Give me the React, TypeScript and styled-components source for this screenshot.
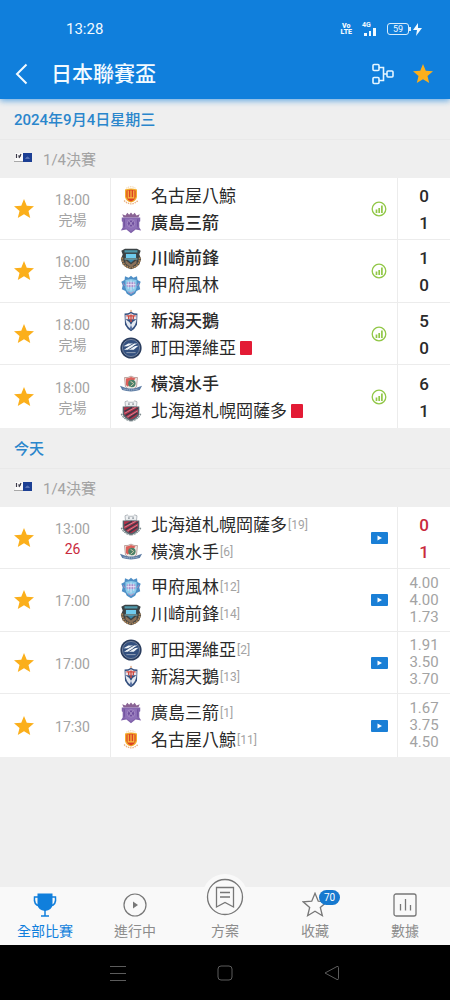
import React from "react";
import styled, { createGlobalStyle, css } from "styled-components";

const color = {
  blue: "#107fdc",
  link: "#2a86cc",
  star: "#fbaf1b",
  red: "#c92a3d",
  muted: "#a3a3a3",
  line: "#ececec",
};

const GlobalStyle = createGlobalStyle`
  *, *::before, *::after { box-sizing: border-box; }
  body {
    margin: 0;
    background: #efefef;
    color: #2a2a2a;
    font-family: Roboto, "Noto Sans CJK TC", sans-serif;
  }
  button { font: inherit; color: inherit; background: none; border: 0; padding: 0; cursor: pointer; }
  h1, h2, h3, ul { margin: 0; padding: 0; font-weight: inherit; }
  ul { list-style: none; }
  svg { display: block; flex: none; }
`;

const Page = styled.div`
  min-height: 100vh;
  display: flex;
  flex-direction: column;
`;

const Header = styled.header`
  background: ${color.blue};
  color: #f2faff;
  box-shadow: 0 2px 6px rgba(16, 127, 220, 0.6);
  z-index: 1;
`;

const StatusBar = styled.div`
  height: 48px;
  padding: 10px 28px 0 66px;
  display: flex;
  align-items: center;
  justify-content: space-between;
  font-size: 15px;
`;

const StatusIcons = styled.div`
  display: flex;
  align-items: center;
`;

const Volte = styled.span`
  display: flex;
  flex-direction: column;
  align-items: center;
  margin-right: 10px;
  font-size: 7px;
  line-height: 6px;
  font-weight: 900;
`;

const Signal = styled.span`
  display: flex;
  flex-direction: column;
  margin-right: 10px;
  font-size: 7px;
  line-height: 6px;
  font-weight: 700;
  svg { margin-left: 2px; }
`;

const Battery = styled.span`
  position: relative;
  width: 22px;
  height: 12px;
  margin-right: 4px;
  border: 1px solid #d8ecfb;
  border-radius: 3px;
  font-size: 9px;
  line-height: 10px;
  text-align: center;
  &::after {
    content: "";
    position: absolute;
    left: 21px;
    top: 3px;
    width: 2px;
    height: 4px;
    background: #d8ecfb;
  }
`;

const TitleBar = styled.div`
  height: 51px;
  padding: 0 16px 0 12px;
  display: flex;
  align-items: center;
`;

const Title = styled.h1`
  flex: 1;
  margin-left: 19px;
  font-size: 21px;
  line-height: 32px;
  font-weight: 500;
`;

const BarButton = styled.button`
  margin-left: 17px;
  &:first-child { margin-left: 0; }
`;

const Content = styled.main`
  flex: 1;
  padding-bottom: 24px;
`;

const DateHeading = styled.h2`
  height: 41px;
  padding: 0 14px 2px;
  display: flex;
  align-items: center;
  border-bottom: 1px solid #e9e9e9;
  color: ${color.link};
  font-size: 15px;
  font-weight: 500;
`;

const RoundHeading = styled.h3`
  height: 38px;
  padding: 0 14px 2px;
  display: flex;
  align-items: center;
  gap: 11px;
  color: ${color.muted};
  font-size: 15px;
`;

const MatchRow = styled.li`
  height: 63px;
  display: grid;
  grid-template-columns: 48px 62px 1fr 36px 53px;
  background: #fff;
  border-bottom: 1px solid ${color.line};
  &:nth-child(odd) { height: 62px; }
  &:last-child { border-bottom: 0; }
`;

const FavButton = styled.button`
  display: grid;
  place-items: center;
`;

const Kickoff = styled.div`
  display: flex;
  flex-direction: column;
  justify-content: center;
  padding: 2px 13px 0 0;
  text-align: center;
  color: ${color.muted};
  font-size: 14px;
  line-height: 20px;
`;

const Minute = styled.span`
  color: ${color.red};
`;

const Teams = styled.div`
  display: flex;
  flex-direction: column;
  justify-content: center;
  padding: 2px 0 0 8px;
  border-left: 1px solid ${color.line};
`;

const Team = styled.div<{ $winner?: boolean }>`
  height: 27px;
  display: flex;
  align-items: center;
  white-space: nowrap;
  font-size: 17px;
  line-height: 27px;
  font-weight: ${(p) => (p.$winner ? 500 : 400)};
  & > svg { margin-right: 8px; }
`;

const Rank = styled.span`
  margin-left: 1px;
  color: ${color.muted};
  font-size: 12px;
`;

const RedCard = styled.span`
  width: 12px;
  height: 14px;
  margin-left: 4px;
  border-radius: 1px;
  background: #e31b35;
`;

const MediaButton = styled.button`
  display: grid;
  place-items: center;
`;

const Numbers = styled.div<{ $kind: "final" | "live" | "odds" }>`
  display: flex;
  flex-direction: column;
  justify-content: center;
  padding-top: 2px;
  border-left: 1px solid ${color.line};
  text-align: center;
  font-size: 17px;
  line-height: 27px;
  font-weight: 500;
  ${(p) => p.$kind === "live" && css`color: ${color.red};`}
  ${(p) =>
    p.$kind === "odds" &&
    css`
      padding-top: 0;
      color: ${color.muted};
      font-size: 15px;
      line-height: 17px;
      font-weight: 400;
    `}
`;

const TabBar = styled.nav`
  height: 58px;
  display: grid;
  grid-template-columns: repeat(5, 1fr);
  grid-template-rows: 100%;
  background: #f9f9f9;
`;

const Tab = styled.button<{ $active?: boolean }>`
  display: flex;
  flex-direction: column;
  align-items: center;
  justify-content: flex-end;
  gap: 2px;
  padding-bottom: 3px;
  color: ${(p) => (p.$active ? color.blue : "#8c8c8c")};
  font-size: 14px;
  line-height: 22px;
`;

const TabIcon = styled.span<{ $raised?: boolean }>`
  position: relative;
  flex: none;
  height: 26px;
  display: grid;
  place-items: center;
  ${(p) =>
    p.$raised &&
    css`
      width: 46px;
      height: 46px;
      margin-bottom: -2px;
      border-radius: 50%;
      background: #f9f9f9;
    `}
`;

const Badge = styled.span`
  position: absolute;
  left: 17px;
  top: -2px;
  width: 21px;
  height: 15px;
  border-radius: 8px;
  background: #1679cf;
  color: #fff;
  font-size: 10px;
  line-height: 15px;
`;

const SystemBar = styled.div`
  height: 55px;
  padding: 0 64px;
  display: grid;
  grid-template-columns: repeat(3, 1fr);
  background: #000;
  color: #5c5c5c;
`;

const SystemButton = styled.button`
  display: grid;
  place-items: center;
`;

const STAR = "M12 1.2l3 7.3 7.9.6-6 5.1 1.9 7.7L12 17.7l-6.8 4.2 1.9-7.7-6-5.1 7.9-.6z";

const Star = ({ size }: { size: number }) => (
  <svg width={size} height={size} viewBox="0 0 24 24" fill={color.star}>
    <path d={STAR} />
  </svg>
);

const FlagMark = () => (
  <svg width="18" height="10" viewBox="0 0 18 10">
    <path d="M1 0h8v9H1z" fill="#fafafa" />
    <path d="M9 0h9v9H9z" fill="#1c3f94" />
    <path d="M2.500 1v4M4 3h3M7 1l-2 4" stroke="#3d3b4a" strokeWidth="1.2" fill="none" />
    <path d="M0 8.500h9" stroke="#a8a8a8" />
    <path d="M11 6q2.500-5 5 0z" fill="#5874b8" />
  </svg>
);

type CrestId =
  | "nagoya" | "hiroshima" | "kawasaki" | "kofu"
  | "niigata" | "machida" | "yokohama" | "sapporo";

const crests: Record<CrestId, React.ReactNode> = {
  nagoya: (
    <>
      <path d="M4.500 17q7.500 7 15 0" fill="none" stroke="#e8b080" strokeWidth="1.500" strokeDasharray="1.500 1" />
      <path d="M7 3.500q5-3 10 0" fill="none" stroke="#e9b878" strokeDasharray="1 1" />
      <path d="M5.500 5q6.500-2 13 0v8q-1 4.500-6.500 6-5.500-1.500-6.500-6z" fill="#f3ae2c" />
      <path d="M7 6q5-1.500 10 0v7q-1 3.500-5 5-4-1.500-5-5z" fill="#dd4124" />
      <path d="M9 6v8h6V6M12 6v8" stroke="#f8c040" strokeWidth="1.300" fill="none" />
    </>
  ),
  hiroshima: (
    <>
      <path d="M4 6L2.500 2.500 6 4l2-3 2 2 2-2.500L14 3l2-2 2 3 3.500-1.500L20 6z" fill="#8a6394" />
      <path d="M2 6h20v4l-1 1v6l2 3-6-1-5 4-5-4-6 1 2-3v-6l-1-1z" fill="#8163ab" />
      <path d="M5 7h14v10l-7 4-7-4z" fill="#8e70b8" />
      <circle cx="12" cy="12.500" r="4" fill="#6f4f9e" stroke="#b39bd0" strokeWidth="0.800" />
      <path d="M10 10l4 5M14 10l-4 5" stroke="#c1abd8" strokeWidth="0.800" />
      <path d="M5 8v8M19 8v8" stroke="#6b4d98" strokeWidth="0.800" />
    </>
  ),
  kawasaki: (
    <>
      <path d="M1.500 3l4-2h13l4 2-1.500 4 2 5-2 6-4.500 3.500L12 23l-4.500-1.500L3 18l-2-6 2-5z" fill="#3b4244" />
      <path d="M5 2.500h14v2.500H5z" fill="#4f98ab" />
      <path d="M6.500 6.500h11v4.500h-11z" fill="#6fcbee" />
      <path d="M2.500 10.500q0 10 9.500 11 9.500-1 9.500-11" fill="none" stroke="#a98258" strokeWidth="2.200" strokeDasharray="2 0.800" />
      <path d="M6 13l6 5 6-5v4l-6 4-6-4z" fill="#8a715a" />
      <path d="M8 12.500h8l-4 3.500z" fill="#3787a9" />
      <path d="M5 12h14" stroke="#91c9cf" />
    </>
  ),
  kofu: (
    <>
      <path d="M12 1l2.500 2 4-1.500.5 4 3.500 2-1.500 4 1 4-4 2-1.500 3-4.500 2.500L7.500 20.500 6 17.500l-4-2 1-4-1.500-4 3.500-2 .5-4 4 1.500z" fill="#4f8fc6" />
      <path d="M6 5.500l6-1 6 1v8q-1 5-6 7-5-2-6-7z" fill="#8ccbea" />
      <path d="M7.500 8h9v5h-9z" fill="#a98cc8" />
      <path d="M9 7v8M12 6v11M15 7v8M7 10.500h10" stroke="#eceafa" strokeWidth="0.900" />
      <path d="M3.500 9l2 3M20.500 9l-2 3M9 18l3 2 3-2" stroke="#b586b8" fill="none" />
    </>
  ),
  niigata: (
    <>
      <path d="M12 0v5" stroke="#d9804a" />
      <path d="M5 4q4 0 7-2 3 2 7 2l-.5 12q-2.500 5-6.500 7-4-2-6.500-7z" fill="#35507f" />
      <path d="M6 5.500q3 0 6-2 3 2 6 2V10H6z" fill="#e9e4ea" />
      <path d="M7 6.500h10M12 5v8M9.500 6.500V10M14.500 6.500V10" stroke="#cf4a40" strokeWidth="1.500" fill="none" />
      <path d="M6 10q4 2 6 6 2-4 6-6-.5 7-6 11Q6.500 17 6 10z" fill="#e3e8f0" />
      <path d="M10.500 20l1.500-4 1.500 4-1.500 2z" fill="#5b74a3" />
    </>
  ),
  machida: (
    <>
      <circle cx="12" cy="12" r="11.500" fill="#293c5e" />
      <circle cx="12" cy="12" r="9.300" fill="#33507f" stroke="#8795ac" strokeWidth="0.800" />
      <path d="M4 10l5-3h10l-5 3 6-.5-5 4.500H4.500l5-3.500z" fill="#eff4f8" />
      <path d="M6 12l9-5M9 14l8-5" stroke="#29436d" strokeWidth="0.900" />
      <path d="M7 17h10" stroke="#9aa7bb" />
    </>
  ),
  yokohama: (
    <>
      <path d="M5 5q4 .5 7-1.500 3 2 7 1.500l-1 10q-3 3-6 4-3-1-6-4z" fill="#efeae5" stroke="#a98580" strokeWidth="0.800" />
      <path d="M6.500 6q3 0 5.500-1.500L17 6l-8.500 9-2-2z" fill="#dc5f5a" />
      <circle cx="13" cy="11.500" r="4" fill="#4a8068" />
      <path d="M11.500 9l3.500 2.500-3.500 3" stroke="#dccdb0" fill="none" />
      <path d="M0 14l6 2q6 2 12 0l6-2-2.500 4.500q-9.500 3-19 0z" fill="#5b7ba3" />
      <path d="M4 17.500q8 2 16 0" stroke="#c4cfde" fill="none" strokeDasharray="1 1" />
    </>
  ),
  sapporo: (
    <>
      <path d="M6 7L5.500 2 8 1l1.500 1.500h5L16 1l2.500 1L18 7z" fill="#eef0f2" stroke="#8f979e" strokeWidth="0.700" />
      <path d="M9 4.500h1.500M13.500 4.500H15" stroke="#33404c" />
      <path d="M3 7h18v9q-2 4-9 7-7-3-9-7z" fill="#56646c" />
      <path d="M4.500 8h15v7q-2 4-7.500 6-5.500-2-7.500-6z" fill="#b23048" />
      <path d="M5 12.500L13 8M6 17L19.500 9M10 20l9-6" stroke="#333c4a" strokeWidth="1.500" />
      <path d="M5 14.500L17 8M8 18.500L19 12" stroke="#e3b4ba" strokeWidth="0.700" />
      <path d="M1.500 15q2.500 6 10.500 8 8-2 10.500-8" fill="none" stroke="#7f8c8f" strokeWidth="1.500" strokeDasharray="2 0.800" />
    </>
  ),
};

const Crest = ({ id }: { id: CrestId }) => (
  <svg width="24" height="24" viewBox="-1 -1 26 26" aria-hidden="true">{crests[id]}</svg>
);

const StatsIcon = () => (
  <svg width="16" height="16" viewBox="0 0 16 16" fill="none" stroke="#91c747">
    <circle cx="8" cy="8" r="6.800" strokeWidth="1.300" />
    <path d="M5.500 8.500V12M8.200 7v5M10.900 4.500V12" strokeWidth="1.700" />
  </svg>
);

const VideoIcon = () => (
  <svg width="17" height="12" viewBox="0 0 17 12">
    <rect width="17" height="12" rx="1" fill="#1a7fd6" />
    <path d="M6.500 3.500L11 6l-4.500 2.500z" fill="#fff" />
  </svg>
);

interface Side { name: string; crest: CrestId; winner?: boolean; red?: boolean; rank?: number }
interface Match {
  time: string;
  state?: string;
  minute?: string;
  sides: Side[];
  kind: "final" | "live" | "odds";
  numbers: string[];
}

const team: Record<CrestId, Side> = {
  nagoya: { name: "名古屋八鯨", crest: "nagoya" },
  hiroshima: { name: "廣島三箭", crest: "hiroshima" },
  kawasaki: { name: "川崎前鋒", crest: "kawasaki" },
  kofu: { name: "甲府風林", crest: "kofu" },
  niigata: { name: "新潟天鵝", crest: "niigata" },
  machida: { name: "町田澤維亞", crest: "machida" },
  yokohama: { name: "橫濱水手", crest: "yokohama" },
  sapporo: { name: "北海道札幌岡薩多", crest: "sapporo" },
};

const days: { label: string; round: string; matches: Match[] }[] = [
  {
    label: "2024年9月4日星期三",
    round: "1/4決賽",
    matches: [
      { time: "18:00", state: "完場", kind: "final", numbers: ["0", "1"], sides: [team.nagoya, { ...team.hiroshima, winner: true }] },
      { time: "18:00", state: "完場", kind: "final", numbers: ["1", "0"], sides: [{ ...team.kawasaki, winner: true }, team.kofu] },
      { time: "18:00", state: "完場", kind: "final", numbers: ["5", "0"], sides: [{ ...team.niigata, winner: true }, { ...team.machida, red: true }] },
      { time: "18:00", state: "完場", kind: "final", numbers: ["6", "1"], sides: [{ ...team.yokohama, winner: true }, { ...team.sapporo, red: true }] },
    ],
  },
  {
    label: "今天",
    round: "1/4決賽",
    matches: [
      { time: "13:00", minute: "26", kind: "live", numbers: ["0", "1"], sides: [{ ...team.sapporo, rank: 19 }, { ...team.yokohama, rank: 6 }] },
      { time: "17:00", kind: "odds", numbers: ["4.00", "4.00", "1.73"], sides: [{ ...team.kofu, rank: 12 }, { ...team.kawasaki, rank: 14 }] },
      { time: "17:00", kind: "odds", numbers: ["1.91", "3.50", "3.70"], sides: [{ ...team.machida, rank: 2 }, { ...team.niigata, rank: 13 }] },
      { time: "17:30", kind: "odds", numbers: ["1.67", "3.75", "4.50"], sides: [{ ...team.hiroshima, rank: 1 }, { ...team.nagoya, rank: 11 }] },
    ],
  },
];

const MatchItem = ({ match }: { match: Match }) => (
  <MatchRow>
    <FavButton aria-label="收藏" aria-pressed="true"><Star size={22} /></FavButton>
    <Kickoff>
      <span>{match.time}</span>
      {match.state && <span>{match.state}</span>}
      {match.minute && <Minute>{match.minute}</Minute>}
    </Kickoff>
    <Teams>
      {match.sides.map((s) => (
        <Team key={s.name} $winner={s.winner}>
          <Crest id={s.crest} />
          {s.name}
          {s.rank && <Rank>[{s.rank}]</Rank>}
          {s.red && <RedCard />}
        </Team>
      ))}
    </Teams>
    <MediaButton aria-label={match.kind === "final" ? "數據" : "直播"}>
      {match.kind === "final" ? <StatsIcon /> : <VideoIcon />}
    </MediaButton>
    <Numbers $kind={match.kind}>
      {match.numbers.map((n, i) => <span key={i}>{n}</span>)}
    </Numbers>
  </MatchRow>
);

export default function App() {
  return (
    <>
      <GlobalStyle />
      <Page>
        <Header>
          <StatusBar>
            <span>13:28</span>
            <StatusIcons>
              <Volte><span>Vo</span><span>LTE</span></Volte>
              <Signal>
                <span>4G</span>
                <svg width="13" height="8" viewBox="0 0 13 8" fill="#f2faff">
                  <path d="M0 5h3v3H0zM5 3h2v5H5zM9 0h3v8H9z" />
                </svg>
              </Signal>
              <Battery>59</Battery>
              <svg width="9" height="13" viewBox="0 0 9 13" fill="#f2faff">
                <path d="M5 0L0 7h4l-1 6 6-8H5z" />
              </svg>
            </StatusIcons>
          </StatusBar>
          <TitleBar>
            <BarButton aria-label="返回">
              <svg width="20" height="22" viewBox="0 0 20 22" fill="none" stroke="#f2faff" strokeWidth="2">
                <path d="M14.500 1.500L5 11l9.500 9.500" />
              </svg>
            </BarButton>
            <Title>日本聯賽盃</Title>
            <BarButton aria-label="對陣圖">
              <svg width="23" height="22" viewBox="0 0 23 22" fill="none" stroke="#e6f6ff" strokeWidth="1.600">
                <rect x="1" y="1.500" width="6" height="6" rx="1" />
                <rect x="1" y="14.500" width="6" height="6" rx="1" />
                <rect x="15" y="8" width="6" height="6" rx="1" />
                <path d="M7 4.500h4.500v13H7M11.500 11H15" />
              </svg>
            </BarButton>
            <BarButton aria-label="收藏"><Star size={22} /></BarButton>
          </TitleBar>
        </Header>

        <Content>
          {days.map((day) => (
            <section key={day.label}>
              <DateHeading>{day.label}</DateHeading>
              <RoundHeading><FlagMark />{day.round}</RoundHeading>
              <ul>
                {day.matches.map((m, i) => <MatchItem key={i} match={m} />)}
              </ul>
            </section>
          ))}
        </Content>

        <TabBar>
          <Tab $active>
            <TabIcon>
              <svg width="26" height="26" viewBox="0 0 26 26" fill="none" stroke={color.blue} strokeWidth="1.500">
                <path d="M5.500 1.500h15V13q-.5 5-7.500 6-7-1-7.500-6z" fill={color.blue} stroke="none" />
                <path d="M6 5H2.500q-1 8 5 9M20 5h3.500q1 8-5 9M13 18v6M9 24h8" />
              </svg>
            </TabIcon>
            全部比賽
          </Tab>
          <Tab>
            <TabIcon>
              <svg width="24" height="24" viewBox="0 0 24 24" fill="none" stroke="#777" strokeWidth="1.200">
                <circle cx="12" cy="12" r="11" />
                <path d="M10 8.500l5 3.500-5 3.500z" fill="#777" stroke="none" />
              </svg>
            </TabIcon>
            進行中
          </Tab>
          <Tab>
            <TabIcon $raised>
              <svg width="38" height="38" viewBox="0 0 38 38" fill="none" stroke="#777" strokeWidth="1.300">
                <circle cx="19" cy="19" r="17.500" />
                <path d="M10.500 9.500h17v19.500L19 24.500 10.500 29z" />
                <path d="M14 14.500h10M14 19h10" />
              </svg>
            </TabIcon>
            方案
          </Tab>
          <Tab>
            <TabIcon>
              <svg width="26" height="26" viewBox="0 0 24 24" fill="none" stroke="#777" strokeWidth="1.200">
                <path d={STAR} />
              </svg>
              <Badge>70</Badge>
            </TabIcon>
            收藏
          </Tab>
          <Tab>
            <TabIcon>
              <svg width="24" height="24" viewBox="0 0 24 24" fill="none" stroke="#777" strokeWidth="1.300">
                <rect x="1" y="1" width="22" height="22" rx="2" />
                <path d="M7.500 11v6.500M12.500 6v11.500M17.500 12v5.500" />
              </svg>
            </TabIcon>
            數據
          </Tab>
        </TabBar>

        <SystemBar>
          <SystemButton aria-label="多工">
            <svg width="16" height="16" viewBox="0 0 16 16" stroke="currentColor"><path d="M0 1.500h16M0 8.500h16M0 15.500h16" /></svg>
          </SystemButton>
          <SystemButton aria-label="主畫面">
            <svg width="16" height="16" viewBox="0 0 16 16" fill="none" stroke="currentColor"><rect x="1" y="1" width="14" height="14" rx="3" /></svg>
          </SystemButton>
          <SystemButton aria-label="上一頁">
            <svg width="16" height="16" viewBox="0 0 16 16" fill="none" stroke="currentColor" strokeLinejoin="round"><path d="M1 8L13 1.500q1.500-.5 1.500 1v11q0 1.500-1.500 1z" /></svg>
          </SystemButton>
        </SystemBar>
      </Page>
    </>
  );
}
